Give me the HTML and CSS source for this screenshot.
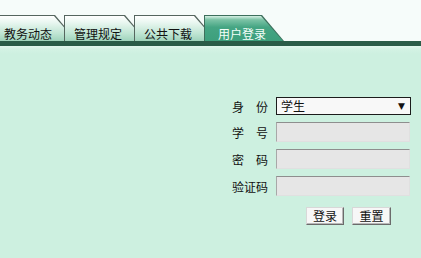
FILE: index.html
```html
<!DOCTYPE html>
<html lang="zh">
<head>
<meta charset="utf-8">
<title>用户登录</title>
<link rel="stylesheet" href="styles.css">
</head>
<body>
<div class="page">
  <div class="header">
    <div class="tabs">
      <div class="tab first"><div class="tab-inner">教务动态</div></div>
      <div class="tab"><div class="tab-inner">管理规定</div></div>
      <div class="tab"><div class="tab-inner">公共下载</div></div>
      <div class="tab active"><div class="tab-inner">用户登录</div></div>
    </div>
    <div class="bar"></div>
  </div>
  <div class="main">
    <form class="login">
      <label class="lbl">身份</label>
      <div class="select"><span>学生</span><span class="arrow">▼</span></div>
      <label class="lbl">学号</label>
      <div class="input"></div>
      <label class="lbl">密码</label>
      <div class="input"></div>
      <label class="lbl">验证码</label>
      <div class="input"></div>
      <div class="buttons">
        <button type="button" class="btn">登录</button>
        <button type="button" class="btn">重置</button>
      </div>
    </form>
  </div>
</div>
</body>
</html>
```
FILE: styles.css
```css
html, body {
  margin: 0;
  padding: 0;
  height: 100%;
}
body {
  font-family: "Noto Sans CJK SC", sans-serif;
  font-size: 12px;
  background: #cdf0e0;
}
.page {
  display: flex;
  flex-direction: column;
  min-height: 100%;
}
.header {
  background: #f6fcfa;
  padding-top: 15px;
}
.tabs {
  display: flex;
  height: 26px;
  overflow: hidden;
}
.tab {
  flex: none;
  width: 83px;
  height: 26px;
  margin-right: -13px;
  box-sizing: border-box;
  padding: 1px 0 0 1px;
  background: #55665f;
  clip-path: polygon(0 0, 61px 0, 83px 100%, 0 100%);
}
.tab.first {
  margin-left: -6px;
}
.tab-inner {
  height: 100%;
  box-sizing: border-box;
  padding: 12px 0 0 9px;
  line-height: 12px;
  color: #111;
  white-space: nowrap;
  background: linear-gradient(#ffffff 0%, #eaf7f1 25%, #bfe5d3 70%, #9fd3bb 100%);
  clip-path: polygon(0 0, 59px 0, 81px 100%, 0 100%);
}
.tab.active {
  width: 80px;
  background: #3d6f5c;
  clip-path: polygon(0 0, 58px 0, 80px 100%, 0 100%);
}
.tab.active .tab-inner {
  color: #f4fff9;
  padding-left: 13px;
  background: linear-gradient(#d6f0e4 0%, #7cc3a6 15%, #45a583 45%, #3d9f7c 100%);
  clip-path: polygon(0 0, 56px 0, 78px 100%, 0 100%);
}
.bar {
  height: 5px;
  background: #2a5c48;
}
.main {
  flex: 1;
  display: flex;
  justify-content: flex-end;
  padding: 51px 10px 0 0;
  background: linear-gradient(#e2f7ee 0, #d3f2e4 3px, #cdf0e0 8px);
}
.login {
  display: grid;
  grid-template-columns: 36px 135px;
  column-gap: 8px;
  row-gap: 7px;
  grid-template-rows: 18px 20px 20px 20px 18px;
  align-items: center;
  margin: 0;
}
.lbl {
  text-align: justify;
  text-align-last: justify;
  line-height: 12px;
  color: #111;
  padding-top: 2px;
}
.select {
  height: 18px;
  width: 135px;
  box-sizing: border-box;
  border: 1px solid #1c1c1c;
  background: #f8f8f8;
  display: flex;
  align-items: center;
  justify-content: space-between;
  padding: 0 5px 0 4px;
  line-height: 14px;
  color: #111;
}
.arrow {
  font-size: 9px;
  font-family: "DejaVu Sans", sans-serif;
}
.input {
  height: 20px;
  width: 134px;
  box-sizing: border-box;
  background: #e6e6e6;
  border-top: 1px solid #8e8e8e;
  border-left: 1px solid #a8a8a8;
  border-right: 1px solid #e0e0e0;
  border-bottom: 1px solid #e0e0e0;
}
.buttons {
  grid-column: 2;
  display: flex;
  gap: 8px;
  padding-left: 30px;
  margin-top: 8px;
}
.btn {
  width: 38px;
  height: 18px;
  padding: 0;
  font-family: "Noto Sans CJK SC", sans-serif;
  font-size: 12px;
  line-height: 12px;
  color: #111;
  background: #f7f7f7;
  border: 1px solid;
  border-color: #d8d8d8 #6b6b6b #6b6b6b #d8d8d8;
  box-shadow: inset -1px -1px 0 #b8b8b8;
}
.btn + .btn {
  width: 39px;
}
```
